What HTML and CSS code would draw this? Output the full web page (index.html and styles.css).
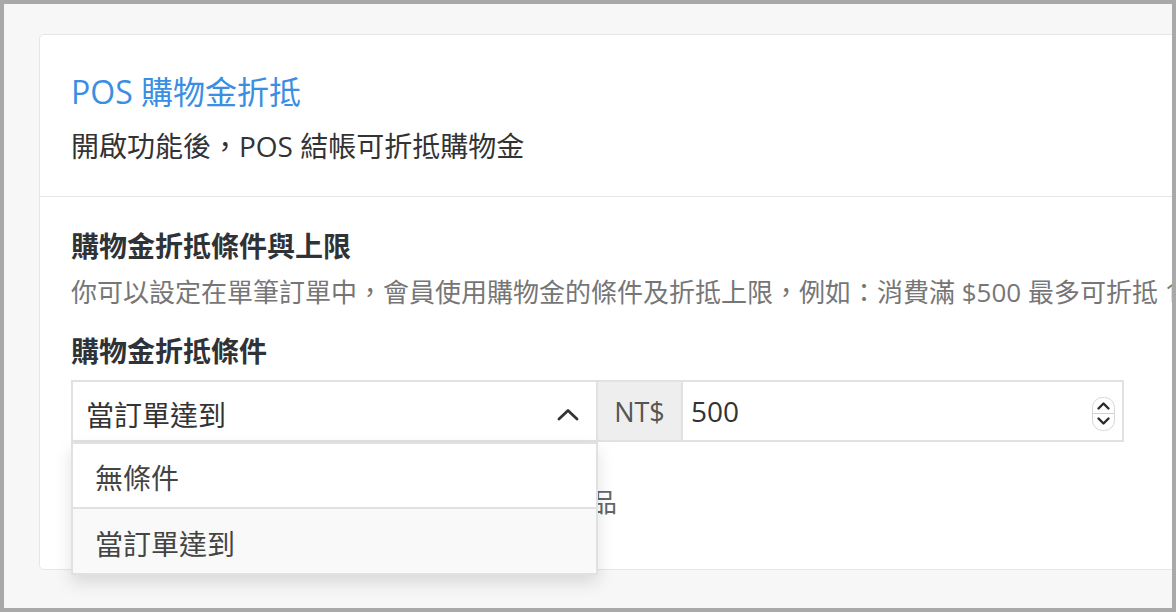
FILE: index.html
```html
<!DOCTYPE html>
<html lang="zh-Hant">
<head>
    <meta charset="UTF-8" />
    <title>POS 購物金折抵</title>
    <link rel="stylesheet" href="styles.css">
</head>
<body>
    <div class="frame">
        <div class="card">
            <div class="card-head">
                <h1 class="card-title">POS 購物金折抵</h1>
                <p class="card-desc">開啟功能後，POS 結帳可折抵購物金</p>
            </div>
            <div class="card-body">
                <h2 class="section-title">購物金折抵條件與上限</h2>
                <p class="section-desc">你可以設定在單筆訂單中，會員使用購物金的條件及折抵上限，例如：消費滿 $500 最多可折抵 100 元</p>
                <h3 class="field-label">購物金折抵條件</h3>
                <div class="input-group">
                    <div class="select">
                        <span class="select-value">當訂單達到</span>
                        <svg class="select-arrow" width="22" height="13" viewBox="0 0 22 13">
                            <polyline points="2,11 11,2.5 20,11" fill="none" stroke="#333" stroke-width="2.8" stroke-linecap="round" stroke-linejoin="round"/>
                        </svg>
                        <ul class="select-menu">
                            <li class="select-option">無條件</li>
                            <li class="select-option active">當訂單達到</li>
                        </ul>
                    </div>
                    <span class="addon">NT$</span>
                    <div class="number-input">
                        <span class="number-value">500</span>
                        <svg class="spinner" width="23" height="34" viewBox="0 0 23 34">
                            <rect x="0.5" y="0.5" width="22" height="33" rx="10" fill="#fff" stroke="#d6d6d6"/>
                            <line x1="1" y1="16.5" x2="22" y2="16.5" stroke="#d0d0d0"/>
                            <polyline points="6.5,11.5 11.5,6.5 16.5,11.5" fill="none" stroke="#2a2a2a" stroke-width="2.4" stroke-linecap="round" stroke-linejoin="round"/>
                            <polyline points="6.5,21.5 11.5,26.5 16.5,21.5" fill="none" stroke="#2a2a2a" stroke-width="2.4" stroke-linecap="round" stroke-linejoin="round"/>
                        </svg>
                    </div>
                </div>
                <p class="rule-text">購物金折抵不適用於已參與任何優惠活動的商品</p>
            </div>
        </div>
    </div>
</body>
</html>
```

FILE: styles.css
```css
body {
    margin: 0;
    font-family: "Open Sans", "Noto Sans CJK TC", sans-serif;
    color: #333;
}
.frame {
    width: 1176px;
    height: 612px;
    box-sizing: border-box;
    border: 4px solid #a9a9a9;
    background-color: #f7f7f7;
    overflow: hidden;
    padding: 30px 0 0 35px;
}
.card {
    width: 1200px;
    background-color: #fff;
    border: 1px solid #e6e6e6;
    border-radius: 5px;
}
.card-head {
    padding: 37px 31px 30px;
}
.card-title {
    margin: 0;
    font-size: 32px;
    line-height: 40px;
    font-weight: 400;
    color: #3a8ee3;
}
.card-desc {
    margin: 14px 0 0;
    font-size: 28px;
    line-height: 40px;
    color: #333;
}
.card-body {
    border-top: 1px solid #e6e6e6;
    padding: 29px 31px 49px;
}
.section-title,
.field-label {
    margin: 0;
    font-size: 28px;
    line-height: 40px;
    font-weight: 700;
    color: #2f3236;
}
.section-desc {
    margin: 8px 0 0;
    font-size: 26px;
    line-height: 36px;
    color: #767676;
    white-space: nowrap;
}
.field-label {
    margin-top: 21px;
}
.input-group {
    display: flex;
    width: 1053px;
    height: 62px;
    box-sizing: border-box;
    margin-top: 9px;
    border: 2px solid #e1e1e1;
}
.select {
    position: relative;
    display: flex;
    align-items: center;
    width: 525px;
    flex-shrink: 0;
    padding: 5px 17px 0 13px;
    box-sizing: border-box;
    border-right: 2px solid #e1e1e1;
    font-size: 28px;
    color: #333;
}
.select .select-value {
    flex: 1;
}
.select-arrow {
    margin-top: 2px;
}
.select-menu {
    position: absolute;
    top: calc(100% + 2px);
    left: -2px;
    right: -2px;
    margin: 0;
    padding: 0;
    list-style: none;
    background-color: #fff;
    border: 2px solid #e1e1e1;
    box-shadow: 0 8px 16px rgba(0, 0, 0, 0.12);
    z-index: 10;
}
.select-option {
    height: 63px;
    padding: 3px 22px 0;
    box-sizing: border-box;
    display: flex;
    align-items: center;
    font-size: 28px;
    color: #444;
}
.select-option + .select-option {
    height: 66px;
    border-top: 2px solid #e1e1e1;
}
.select-option.active {
    background-color: #f9f9f9;
}
.addon {
    display: flex;
    align-items: center;
    justify-content: center;
    width: 85px;
    flex-shrink: 0;
    box-sizing: border-box;
    background-color: #eee;
    border-right: 2px solid #e1e1e1;
    font-size: 27px;
    color: #555;
}
.number-input {
    flex: 1;
    display: flex;
    align-items: center;
    padding: 0 7px 0 8px;
    font-size: 28px;
    color: #333;
}
.number-value {
    flex: 1;
}
.spinner {
    margin-top: 6px;
}
.rule-text {
    margin: 42px 0 0;
    font-size: 26px;
    line-height: 36px;
    color: #666;
}
```
